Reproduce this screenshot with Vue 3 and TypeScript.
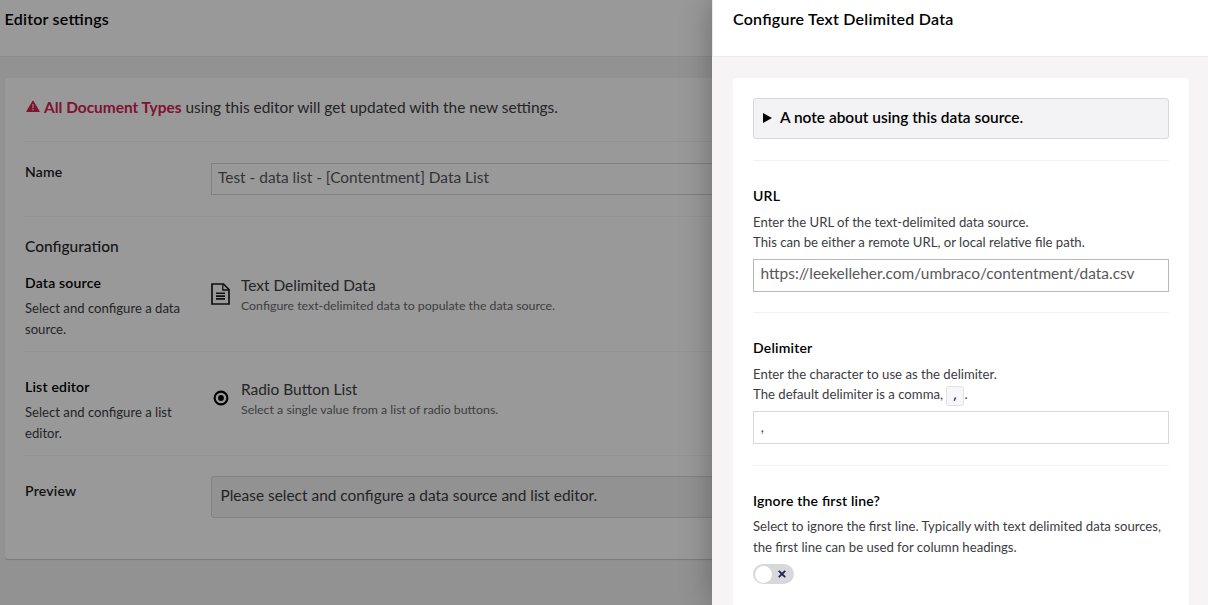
<script setup lang="ts">
interface EditorRow {
  title: string
  hint: string
  icon: 'document' | 'radio'
  name: string
  description: string
}

const rows: EditorRow[] = [
  {
    title: 'Data source',
    hint: 'Select and configure a data source.',
    icon: 'document',
    name: 'Text Delimited Data',
    description: 'Configure text-delimited data to populate the data source.',
  },
  {
    title: 'List editor',
    hint: 'Select and configure a list editor.',
    icon: 'radio',
    name: 'Radio Button List',
    description: 'Select a single value from a list of radio buttons.',
  },
]

const name = 'Test - data list - [Contentment] Data List'
const url = 'https://leekelleher.com/umbraco/contentment/data.csv'
const delimiter = ','
</script>

<template>
  <div class="screen">
    <section class="editor">
      <header class="editor-header"><h1>Editor settings</h1></header>
      <div class="card">
        <div class="row warning">
          <svg class="alert" viewBox="0 0 14 12" width="14" height="12">
            <path fill="#d42054" stroke="#d42054" stroke-linejoin="round" d="M7 .9 13.3 11.5H.7Z" />
            <path fill="#fff" fill-opacity=".7" d="M6.3 4h1.4v4.2H6.3zM6.3 9.1h1.4v1.3H6.3z" />
          </svg>
          <p><strong>All Document Types</strong> using this editor will get updated with the new settings.</p>
        </div>
        <div class="row name-row">
          <h3>Name</h3>
          <div class="input">{{ name }}</div>
        </div>
        <h2>Configuration</h2>
        <div v-for="row in rows" :key="row.title" class="row picker">
          <div class="label">
            <h3>{{ row.title }}</h3>
            <p>{{ row.hint }}</p>
          </div>
          <div class="glyph">
            <svg v-if="row.icon === 'document'" viewBox="0 0 19 22" width="19" height="22" fill="none" stroke="#1b1b1b">
              <path stroke-width="1.7" d="M1 1h11.5L18 6.5V21H1Z" />
              <path stroke-width="1.3" d="M11.8 1.2V7h6" />
              <path stroke-width="1.6" d="M5 10.3h9M5 13.1h9M5 15.9h9" />
            </svg>
            <svg v-else viewBox="0 0 16 16" width="16" height="16" fill="none">
              <circle cx="8" cy="8" r="6.4" stroke="#000" stroke-width="2.1" />
              <circle cx="8" cy="8" r="2.9" fill="#000" />
            </svg>
          </div>
          <div class="node">
            <div class="node-name">{{ row.name }}</div>
            <div class="node-description">{{ row.description }}</div>
          </div>
        </div>
        <div class="preview">
          <h3>Preview</h3>
          <div class="well">Please select and configure a data source and list editor.</div>
        </div>
      </div>
    </section>
    <div class="backdrop"></div>

    <aside class="panel">
      <header class="panel-header"><h1>Configure Text Delimited Data</h1></header>
      <div class="panel-card">
        <div class="note">
          <svg viewBox="0 0 9 10" width="9" height="10"><path d="M0 0 9 5 0 10Z" /></svg>
          <span>A note about using this data source.</span>
        </div>
        <div class="field">
          <h3>URL</h3>
          <p>Enter the URL of the text-delimited data source.<br>This can be either a remote URL, or local relative file path.</p>
          <div class="input focused">{{ url }}</div>
        </div>
        <div class="field">
          <h3>Delimiter</h3>
          <p>Enter the character to use as the delimiter.<br>The default delimiter is a comma, <code>,</code>.</p>
          <div class="input">{{ delimiter }}</div>
        </div>
        <div class="field last">
          <h3>Ignore the first line?</h3>
          <p>Select to ignore the first line. Typically with text delimited data sources, the first line can be used for column headings.</p>
          <div class="toggle">
            <span class="knob"></span>
            <svg viewBox="0 0 8 8" width="8" height="8"><path d="M.8.8 7.2 7.2M7.2.8.8 7.2" fill="none" stroke="#1b264f" stroke-width="1.9" /></svg>
          </div>
        </div>
      </div>
    </aside>
  </div>
</template>

<style>
html, body { overflow: hidden; }
</style>

<style scoped>
* { box-sizing: border-box; }
h1, h2, h3, p { margin: 0; }
.screen {
  position: relative;
  width: 1208px;
  height: 605px;
  overflow: hidden;
  background: #f6f4f5;
  color: #3c3c3f;
  font-family: Lato, "Open Sans", sans-serif;
  font-size: 15.45px;
}
h1, h3 { font-feature-settings: "liga" 1, "clig" 1; }
h1 { font-size: 16px; line-height: 20px; font-weight: 600; letter-spacing: .25px; color: #000; }
h3 { font-size: 14px; line-height: 20px; font-weight: 600; letter-spacing: .2px; color: #000; }
.editor-header, .panel-header {
  height: 57px;
  padding: 9px 4.5px;
  background: #fff;
  border-bottom: 1px solid #e9e9eb;
}
.card {
  width: 1183px;
  height: 481px;
  margin: 21px 0 0 5px;
  padding: 0 20px;
  background: #fff;
  border-radius: 3px;
  box-shadow: 0 1px 1px rgba(0, 0, 0, .16);
}
.row { border-bottom: 1px solid #f3f3f5; }
.warning { display: flex; height: 64px; padding: 19px 0 0 1px; }
.alert { flex: none; margin: 3px 4px 0 0; }
.warning p { line-height: 20px; }
.warning strong { color: #d42054; font-weight: 700; }
.name-row { display: flex; height: 75px; padding-top: 21px; }
.name-row h3 { margin-top: -1px; }
.name-row h3, .preview h3 { flex: none; width: 185.5px; }
.card h3 { color: #1c1c1e; }
.card .picker h3 { color: #000; }
.input {
  flex: 1;
  height: 32px;
  padding: 0 6.5px;
  border: 1px solid #d8d7d9;
  background: #fff;
  color: #58575b;
  line-height: 27px;
}
.card h2 {
  height: 36px;
  padding-top: 19px;
  color: #29292c;
  font-size: 15.5px;
  line-height: 20px;
  font-weight: 500;
}
.picker { display: flex; height: 104px; padding-top: 25px; }
h2 + .picker { height: 99px; padding-top: 20px; }
.label { width: 185px; padding-right: 20px; }
.label p { margin-top: 5px; font-size: 13.13px; line-height: 21px; }
.glyph { display: flex; align-items: center; justify-content: center; width: 21px; height: 22px; margin-top: 10px; }
.node { margin-left: 10px; padding-top: 2px; }
.node-name { line-height: 20px; }
.node-description { margin-top: 1px; color: #68676b; font-size: 12.35px; line-height: 20px; }
.preview { display: flex; padding-top: 20px; }
.preview h3 { padding-top: 5px; }
.well {
  flex: 1;
  height: 42px;
  padding: 8px 9px;
  border: 1px solid #dbdbe0;
  border-radius: 3px;
  background: #f3f3f5;
  line-height: 20px;
}
.backdrop { position: absolute; inset: 0; background: rgba(0, 0, 0, .4); }
.panel {
  position: absolute;
  top: 0;
  right: 0;
  bottom: 0;
  width: 496px;
  background: #f6f4f5;
  box-shadow: 0 0 30px rgba(0, 0, 0, .3);
}
.panel-header { padding-left: 20px; border-left: 1px solid #e9e9eb; }
.panel-card {
  height: 540px;
  margin: 21px 19px 0 21px;
  padding: 20px 20px 0;
  background: #fff;
  border-radius: 3px;
  box-shadow: 0 1px 1px rgba(0, 0, 0, .08);
}
.note {
  display: flex;
  align-items: center;
  gap: 8px;
  height: 41px;
  padding: 0 9px 2px;
  border: 1px solid #d8d7e0;
  border-radius: 3px;
  background: #f3f3f5;
  color: #000;
  font-weight: 600;
}
.note span { margin-top: -2px; }
.note + .field { margin-top: 21px; }
.field { height: 152px; padding-top: 25px; border-top: 1px solid #f3f3f5; }
.field + .field { height: 153px; }
.field p { height: 40px; margin: 6px 0 7px; font-size: 13.15px; line-height: 20px; }
.field .input { height: 33px; line-height: 27px; }
.field + .field .input { line-height: 29px; }
.field .input.focused { border-color: #b8b8b8; }
code {
  padding: 3px 4.5px 3px 5px;
  border: 1px solid #e1e1e8;
  border-radius: 3px;
  background: #f7f7f9;
  color: #1b264f;
  font-family: "Liberation Mono", monospace;
  font-size: 11px;
  font-weight: 700;
  line-height: 14px;
}
.field.last p { height: 42px; margin: 5px 0 6px; line-height: 21px; }
.toggle {
  display: flex;
  align-items: center;
  justify-content: space-between;
  width: 41px;
  height: 20px;
  padding: 0 8px 0 2px;
  border-radius: 10px;
  background: #d8d7d9;
}
.knob { width: 17px; height: 17px; border-radius: 50%; background: #fff; }
</style>
